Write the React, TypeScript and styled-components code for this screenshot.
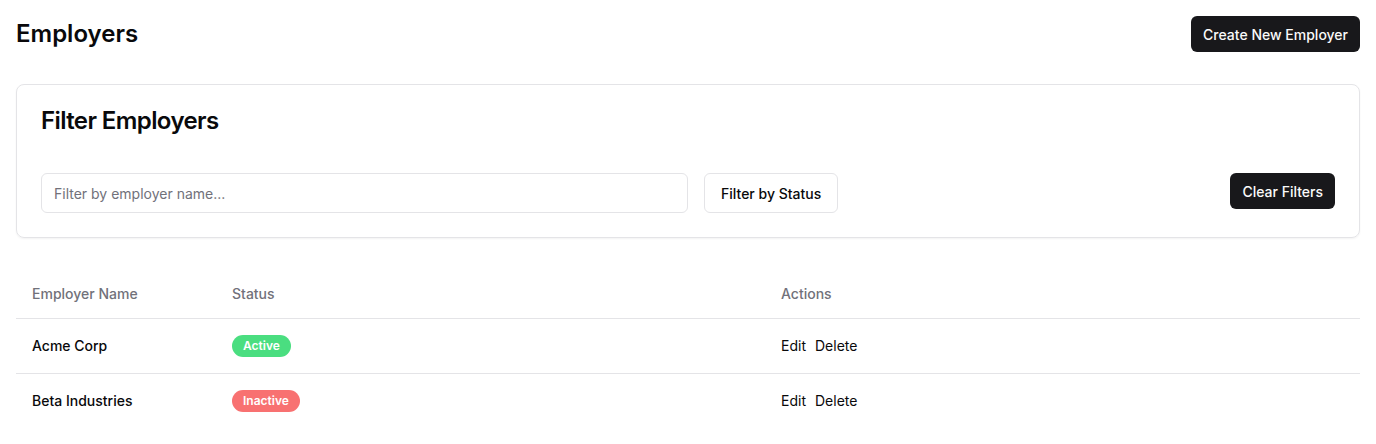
import styled, { createGlobalStyle } from 'styled-components';

const GlobalStyle = createGlobalStyle`
  body {
    margin: 0;
    background: #ffffff;
    font-family: Inter, "Noto Sans", sans-serif;
    color: #09090b;
  }
  * { box-sizing: border-box; }
`

type Employer = { name: string; active: boolean }

const employers: Employer[] = [
  { name: 'Acme Corp', active: true },
  { name: 'Beta Industries', active: false },
]

export default function App() {
  return (
    <>
      <GlobalStyle />
      <Page>
        <TopBar>
          <PageTitle>Employers</PageTitle>
          <DarkButton>Create New Employer</DarkButton>
        </TopBar>

        <Card>
          <CardTitle>Filter Employers</CardTitle>
          <FilterRow>
            <FilterGroup>
              <SearchInput placeholder="Filter by employer name..." />
              <OutlineButton>Filter by Status</OutlineButton>
            </FilterGroup>
            <DarkButton>Clear Filters</DarkButton>
          </FilterRow>
        </Card>

        <Table>
          <colgroup>
            <col style={{ width: 200 }} />
            <col style={{ width: 549 }} />
            <col />
          </colgroup>
          <thead>
            <HeadRow>
              <Th>Employer Name</Th>
              <Th>Status</Th>
              <Th>Actions</Th>
            </HeadRow>
          </thead>
          <tbody>
            {employers.map((e, i) => (
              <Row key={e.name} $last={i === employers.length - 1}>
                <NameCell>{e.name}</NameCell>
                <Td>
                  <Badge $active={e.active}>{e.active ? 'Active' : 'Inactive'}</Badge>
                </Td>
                <Td>
                  <Actions>
                    <ActionLink>Edit</ActionLink>
                    <ActionLink>Delete</ActionLink>
                  </Actions>
                </Td>
              </Row>
            ))}
          </tbody>
        </Table>
      </Page>
    </>
  )
}

const Page = styled.div`
  padding: 16px;
`
const TopBar = styled.div`
  display: flex;
  align-items: center;
  justify-content: space-between;
  margin-bottom: 32px;
`
const PageTitle = styled.h1`
  margin: 0;
  font-size: 24px;
  line-height: 32px;
  font-weight: 600;
`
const DarkButton = styled.button`
  height: 36px;
  padding: 0 12px;
  border: none;
  border-radius: 6px;
  background: #18181b;
  color: #fafafa;
  font-family: inherit;
  font-size: 14px;
  font-weight: 500;
  cursor: pointer;
`
const Card = styled.div`
  border: 1px solid #e4e4e7;
  border-radius: 8px;
  padding: 24px;
  box-shadow: 0 1px 2px rgba(0, 0, 0, 0.05);
`
const CardTitle = styled.h2`
  margin: 0 0 40px;
  font-size: 24px;
  line-height: 24px;
  font-weight: 600;
  letter-spacing: -0.6px;
`
const FilterRow = styled.div`
  display: flex;
  align-items: flex-start;
  justify-content: space-between;
`
const FilterGroup = styled.div`
  display: flex;
  gap: 16px;
`
const SearchInput = styled.input`
  width: 647px;
  height: 40px;
  padding: 0 12px;
  border: 1px solid #e4e4e7;
  border-radius: 6px;
  font-family: inherit;
  font-size: 14px;
  outline: none;
  &::placeholder { color: #71717a; }
`
const OutlineButton = styled.button`
  height: 40px;
  padding: 0 16px;
  border: 1px solid #e4e4e7;
  border-radius: 6px;
  background: #ffffff;
  color: #09090b;
  font-family: inherit;
  font-size: 14px;
  font-weight: 500;
`
const Table = styled.table`
  width: 100%;
  margin-top: 32px;
  border-collapse: collapse;
  table-layout: fixed;
  font-size: 14px;
`
const HeadRow = styled.tr`
  border-bottom: 1px solid #e4e4e7;
`
const Th = styled.th`
  height: 48px;
  padding: 0 16px;
  text-align: left;
  font-weight: 500;
  color: #71717a;
`
const Row = styled.tr<{ $last: boolean }>`
  border-bottom: ${(p) => (p.$last ? 'none' : '1px solid #e4e4e7')};
`
const Td = styled.td`
  padding: 16px;
  vertical-align: middle;
  line-height: 20px;
`
const NameCell = styled(Td)`
  font-weight: 500;
`
const Badge = styled.span<{ $active: boolean }>`
  display: inline-block;
  padding: 2px 10px;
  border: 1px solid transparent;
  border-radius: 999px;
  background: ${(p) => (p.$active ? '#4ade80' : '#f87171')};
  color: #ffffff;
  font-size: 12px;
  line-height: 16px;
  font-weight: 600;
`
const Actions = styled.div`
  display: flex;
  gap: 9px;
`
const ActionLink = styled.span`
  cursor: pointer;
`
